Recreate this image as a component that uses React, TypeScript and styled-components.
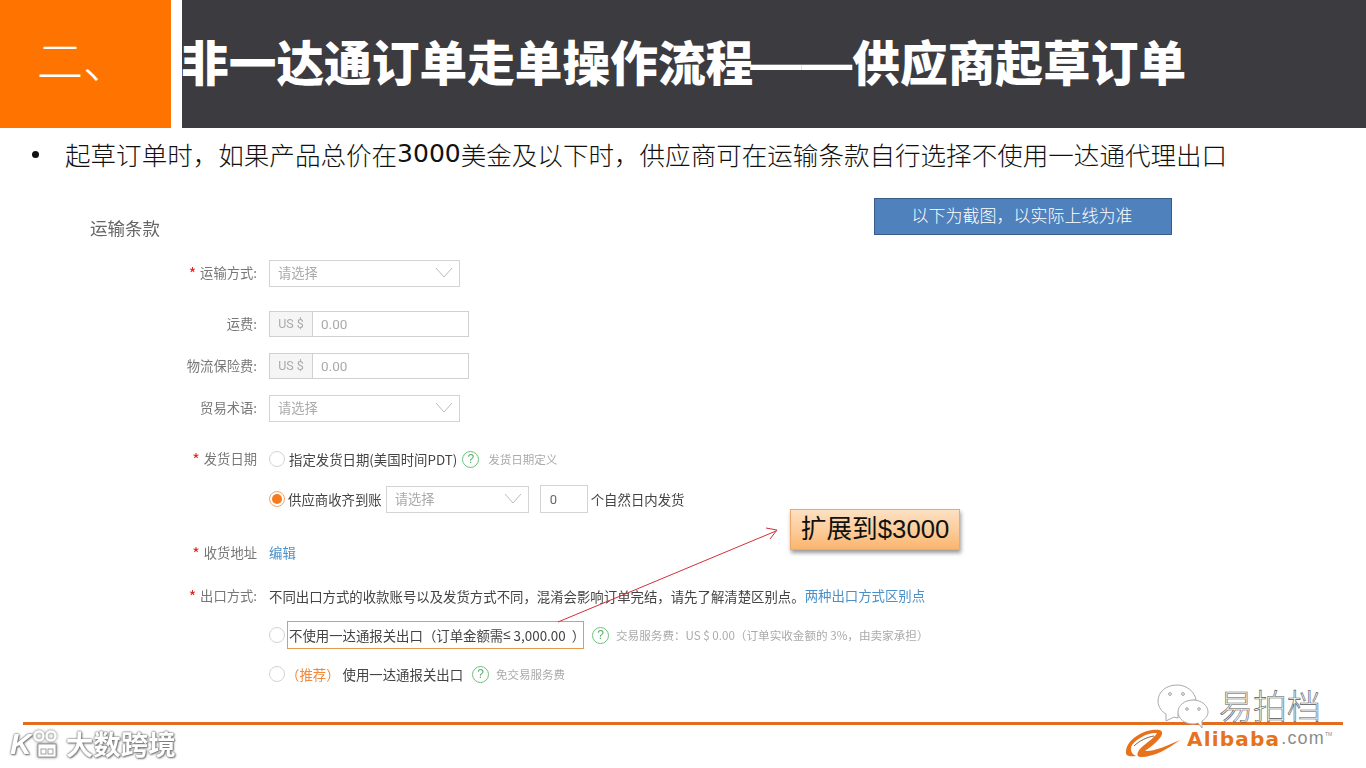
import React from "react";
import styled, { createGlobalStyle } from "styled-components";

const CJK = `"Noto Sans CJK SC", "Liberation Sans", sans-serif`;

const Global = createGlobalStyle`
  html, body { margin: 0; padding: 0; background: #fff; overflow: hidden; }
  * { box-sizing: border-box; }
`;

const Slide = styled.div`
  position: relative;
  width: 1366px;
  height: 768px;
  overflow: hidden;
  background: #fff;
  font-family: ${CJK};
`;

const Header = styled.header`
  display: flex;
  height: 128px;
`;

const SectionTab = styled.div`
  width: 171px;
  padding: 0 0 12px 37px;
  display: flex;
  align-items: center;
  background: #ff7300;
  color: #fff;
  font-size: 46px;
  font-weight: 300;
  line-height: 1;
`;

const TitleBar = styled.div`
  flex: 1;
  margin-left: 11px;
  padding-bottom: 6px;
  display: flex;
  align-items: center;
  overflow: hidden;
  background: #3c3b40;
`;

const Title = styled.h1`
  margin: 0 0 0 -1px;
  color: #fff;
  font-size: 47.7px;
  font-weight: 900;
  line-height: 1;
  white-space: nowrap;
`;

const TitleDash = styled.span`
  margin-left: -3px;
  font-family: "Liberation Sans", sans-serif;
  font-size: 51px;
  font-weight: 700;
  line-height: 0;
`;

const Bullet = styled.div`
  display: flex;
  align-items: center;
  height: 50px;
  padding-left: 32px;
  color: #111;
  font-size: 25.56px;
  font-weight: 300;
  white-space: nowrap;
`;

const BulletDot = styled.span`
  width: 7px;
  height: 7px;
  margin: 2px 26px 0 0;
  border-radius: 50%;
  background: #111;
`;

const Digits = styled.span`
  font-family: "DejaVu Sans", sans-serif;
  font-size: 25px;
  font-weight: 400;
`;

const Form = styled.section`
  filter: blur(0.4px);
`;

const Heading = styled.h2`
  margin: 38px 0 0 90px;
  height: 26px;
  color: #666;
  font-size: 17.5px;
  font-weight: 400;
  line-height: 24px;
`;

const Row = styled.div<{ $h: number; $mt: number }>`
  display: grid;
  grid-template-columns: 88px 1fr;
  column-gap: 12px;
  align-items: center;
  height: ${(p) => p.$h}px;
  margin: ${(p) => p.$mt}px 0 0 169px;
`;

const Label = styled.div`
  padding-bottom: 2px;
  color: #777;
  font-size: 13.3px;
  text-align: right;
  white-space: nowrap;
`;

const Star = styled.span`
  margin-right: 4px;
  color: #e2231a;
  font-size: 16px;
  line-height: 1;
  vertical-align: -2px;
`;

const Controls = styled.div`
  display: flex;
  align-items: center;
  height: 100%;
  white-space: nowrap;
`;

const Select = styled.div<{ $w: number; $ml?: number }>`
  display: flex;
  align-items: center;
  justify-content: space-between;
  width: ${(p) => p.$w}px;
  height: 27px;
  margin-left: ${(p) => p.$ml ?? 0}px;
  padding: 0 6px 2px 8px;
  border: 1px solid #d4d4d4;
  color: #aaa;
  font-size: 13.3px;
`;

const AmountInput = styled.div`
  display: flex;
  align-items: stretch;
  width: 200px;
  height: 100%;
  border: 1px solid #d0d0d0;
  font-family: "Roboto", sans-serif;
  font-size: 13.5px;
  color: #aaa;
`;

const Prefix = styled.div`
  display: flex;
  align-items: center;
  justify-content: center;
  width: 43px;
  padding-bottom: 2px;
  border-right: 1px solid #d0d0d0;
  background: #f5f5f5;
  font-size: 12.5px;
`;

const Value = styled.div`
  display: flex;
  align-items: center;
  padding: 0 0 1px 8px;
`;

const NumberBox = styled.div`
  display: flex;
  align-items: center;
  width: 48px;
  height: 28px;
  margin: 0 3px 0 11px;
  padding-left: 9px;
  border: 1px solid #d4d4d4;
  color: #666;
  font-family: "Roboto", sans-serif;
  font-size: 13px;
`;

const Radio = styled.span<{ $on?: boolean }>`
  flex: none;
  display: flex;
  align-items: center;
  justify-content: center;
  width: 16px;
  height: 16px;
  border-radius: 50%;
  border: 1px solid ${(p) => (p.$on ? "#f5a468" : "#d2d2d2")};
  background: #fff;
  &::after {
    content: "";
    display: ${(p) => (p.$on ? "block" : "none")};
    width: 10px;
    height: 10px;
    border-radius: 50%;
    background: #f77a1c;
  }
`;

const Text = styled.span<{ $ml?: number; $size?: number; $color?: string }>`
  margin-left: ${(p) => p.$ml ?? 0}px;
  padding-bottom: 1px;
  color: ${(p) => p.$color ?? "#444"};
  font-size: ${(p) => p.$size ?? 13.4}px;
`;

const Link = styled.span`
  padding-bottom: 2px;
  color: #4a90c8;
  font-size: 13.4px;
`;

const Help = styled.span<{ $ml: number }>`
  flex: none;
  display: flex;
  align-items: center;
  justify-content: center;
  width: 17px;
  height: 17px;
  margin-left: ${(p) => p.$ml}px;
  border: 1.5px solid #6cc07a;
  border-radius: 50%;
  color: #58ad68;
  font-family: "Liberation Sans", sans-serif;
  font-size: 12px;
`;

const Outlined = styled.div`
  display: flex;
  align-items: center;
  width: 297px;
  height: 28px;
  margin-left: 2px;
  padding: 0 0 1px 1px;
  border: 1px solid #e59a4e;
  color: #444;
  font-size: 13.4px;
`;

const LessEqual = styled.span`
  font-family: "Liberation Sans", sans-serif;
`;

const Closing = styled.span`
  margin-left: 6px;
`;

const Footer = styled.div`
  height: 3px;
  margin: 36px 23px 0;
  background: #e36c1f;
`;

const Note = styled.div`
  position: absolute;
  left: 874px;
  top: 198px;
  width: 298px;
  height: 37px;
  padding: 0 2px 4px 0;
  display: flex;
  align-items: center;
  justify-content: center;
  border: 1px solid #385d8a;
  background: #4f81bd;
  color: #fff;
  font-size: 17px;
  font-weight: 300;
`;

const Callout = styled.div`
  position: absolute;
  left: 790px;
  top: 509px;
  width: 170px;
  height: 41px;
  padding-bottom: 6px;
  display: flex;
  align-items: center;
  justify-content: center;
  border: 1px solid #f0a868;
  background: linear-gradient(180deg, #fde0c2 0%, #fccb98 55%, #fbb56e 100%);
  box-shadow: 1px 3px 4px rgba(0, 0, 0, 0.4);
  color: #111;
  font-family: "Liberation Sans", ${CJK};
  font-size: 25.7px;
  white-space: nowrap;
`;

const ArrowSvg = styled.svg`
  position: absolute;
  left: 550px;
  top: 520px;
`;

const WeChatSvg = styled.svg`
  position: absolute;
  left: 1156px;
  top: 683px;
`;

const Brand = styled.div`
  position: absolute;
  left: 1219px;
  top: 684px;
  color: #fff;
  font-size: 34px;
  font-weight: 300;
  line-height: 42px;
  -webkit-text-stroke: 0.6px #555;
  white-space: nowrap;
`;

const AliLogo = styled.div`
  position: absolute;
  left: 1125px;
  top: 729px;
  display: flex;
  align-items: flex-start;
`;

const AliName = styled.span`
  margin: -2px 0 0 6px;
  color: #e8711c;
  font-family: "DejaVu Sans", sans-serif;
  font-size: 20px;
  font-weight: 700;
  letter-spacing: 1.2px;
  line-height: 24px;
`;

const AliCom = styled.span`
  margin: -1px 0 0 1px;
  color: #8c8c8c;
  font-family: "Liberation Sans", sans-serif;
  font-size: 18px;
  letter-spacing: 1.2px;
  line-height: 21px;
`;

const AliMark = styled.span`
  margin-top: 2px;
  color: #8c8c8c;
  font-family: "Liberation Sans", sans-serif;
  font-size: 5px;
  line-height: 6px;
`;

const Watermark = styled.div`
  position: absolute;
  left: 10px;
  top: 728px;
  display: flex;
  align-items: center;
  height: 32px;
  color: #fff;
  filter: blur(0.4px);
  text-shadow: 0 0 2px #777, 0 0 2px #777, 1px 1px 2px #777;
  white-space: nowrap;
`;

const WatermarkK = styled.span`
  font-family: "Liberation Sans", sans-serif;
  font-size: 30px;
  font-weight: 700;
  font-style: italic;
  line-height: 1;
`;

const WatermarkSvg = styled.svg`
  filter: drop-shadow(0 0 1.5px #666);
  margin-right: 4px;
`;

const WatermarkText = styled.span`
  font-size: 27.5px;
  font-weight: 700;
  line-height: 1;
`;

const Chevron = () => (
  <svg width="18" height="11" viewBox="0 0 18 11">
    <path d="M1 1 L9 10 L17 1" fill="none" stroke="#bbb" strokeWidth="1" />
  </svg>
);

export default function App() {
  return (
    <Slide>
      <Global />
      <Header>
        <SectionTab>二、</SectionTab>
        <TitleBar>
          <Title>非一达通订单走单操作流程<TitleDash>——</TitleDash>供应商起草订单</Title>
        </TitleBar>
      </Header>
      <Bullet>
        <BulletDot />
        起草订单时，如果产品总价在<Digits>3000</Digits>美金及以下时，供应商可在运输条款自行选择不使用一达通代理出口
      </Bullet>
      <Form>
        <Heading>运输条款</Heading>
        <Row $h={27} $mt={18}>
          <Label><Star>*</Star>运输方式:</Label>
          <Controls>
            <Select $w={191}>请选择<Chevron /></Select>
          </Controls>
        </Row>
        <Row $h={26} $mt={24}>
          <Label>运费:</Label>
          <Controls>
            <AmountInput><Prefix>US $</Prefix><Value>0.00</Value></AmountInput>
          </Controls>
        </Row>
        <Row $h={26} $mt={16}>
          <Label>物流保险费:</Label>
          <Controls>
            <AmountInput><Prefix>US $</Prefix><Value>0.00</Value></AmountInput>
          </Controls>
        </Row>
        <Row $h={26} $mt={16}>
          <Label>贸易术语:</Label>
          <Controls>
            <Select $w={191}>请选择<Chevron /></Select>
          </Controls>
        </Row>
        <Row $h={24} $mt={26}>
          <Label><Star>*</Star>发货日期</Label>
          <Controls>
            <Radio />
            <Text $ml={4}>指定发货日期(美国时间PDT)</Text>
            <Help $ml={5}>?</Help>
            <Text $ml={9} $size={11.5} $color="#aaa">发货日期定义</Text>
          </Controls>
        </Row>
        <Row $h={28} $mt={14}>
          <Label />
          <Controls>
            <Radio $on />
            <Text $ml={3}>供应商收齐到账</Text>
            <Select $w={143} $ml={4}>请选择<Chevron /></Select>
            <NumberBox>0</NumberBox>
            <Text>个自然日内发货</Text>
          </Controls>
        </Row>
        <Row $h={24} $mt={28}>
          <Label><Star>*</Star>收货地址</Label>
          <Controls><Link>编辑</Link></Controls>
        </Row>
        <Row $h={24} $mt={19}>
          <Label><Star>*</Star>出口方式:</Label>
          <Controls>
            <Text>不同出口方式的收款账号以及发货方式不同，混淆会影响订单完结，请先了解清楚区别点。</Text>
            <Link>两种出口方式区别点</Link>
          </Controls>
        </Row>
        <Row $h={28} $mt={13}>
          <Label />
          <Controls>
            <Radio />
            <Outlined>不使用一达通报关出口（订单金额需<LessEqual>≤</LessEqual>&nbsp;3,000.00<Closing>）</Closing></Outlined>
            <Help $ml={8}>?</Help>
            <Text $ml={7} $size={11.6} $color="#aaa">交易服务费：US $ 0.00（订单实收金额的 3%，由卖家承担）</Text>
          </Controls>
        </Row>
        <Row $h={24} $mt={13}>
          <Label />
          <Controls>
            <Radio />
            <Text $ml={1} $color="#f08a3c">（推荐）</Text>
            <Text $ml={3}>使用一达通报关出口</Text>
            <Help $ml={9}>?</Help>
            <Text $ml={7} $size={11.5} $color="#aaa">免交易服务费</Text>
          </Controls>
        </Row>
      </Form>
      <Footer />

      <Note>以下为截图，以实际上线为准</Note>
      <ArrowSvg width="235" height="106" viewBox="0 0 235 106">
        <path d="M8 102 L226 11" stroke="#d0303a" strokeWidth="1" fill="none" />
        <path d="M216 8 L227 10 L220 19" stroke="#d0303a" strokeWidth="1" fill="none" />
      </ArrowSvg>
      <Callout>扩展到$3000</Callout>

      <WeChatSvg width="56" height="48" viewBox="0 0 56 48">
        <path d="M21 2 C10 2 2 9 2 18 C2 24 6 29 10 31 L10 38 L18 34 C19 34.5 21 35 22 35 C21 25 29 17 40 17 C39 9 31 2 21 2 Z" fill="#fff" stroke="#aaa" strokeWidth="1" />
        <path d="M37 17 C28 17 22 23 22 29 C22 36 29 41 37 41 C39 41 41 40.5 42 40 L46 45 L46 38 C49 36 52 33 52 29 C52 23 46 17 37 17 Z" fill="#fff" stroke="#aaa" strokeWidth="1" />
        <circle cx="14" cy="11" r="1.4" fill="none" stroke="#888" strokeWidth="0.8" />
        <circle cx="27" cy="11" r="1.4" fill="none" stroke="#888" strokeWidth="0.8" />
        <circle cx="31" cy="26" r="1.3" fill="none" stroke="#888" strokeWidth="0.8" />
        <circle cx="43" cy="26" r="1.3" fill="none" stroke="#888" strokeWidth="0.8" />
      </WeChatSvg>
      <Brand>易拍档</Brand>

      <AliLogo>
        <svg width="56" height="29" viewBox="0 0 56 29">
          <path d="M1 22 C2 12 14 3 27 1 C34 0 38 1 37 5 C36 10 27 17 20 22 C27 23 42 17 55 11 C43 20 29 28 16 28 C10 28 12 22 18 17 C24 12 30 8 32 4 C24 3 12 9 7 16 C5 20 6 25 11 27 C5 28 0 27 1 22 Z" fill="#e8711c" />
          <path d="M9 17 C14 12 22 8 29 7" fill="none" stroke="#5a3a20" strokeWidth="0.8" />
        </svg>
        <AliName>Alibaba</AliName>
        <AliCom>.com</AliCom>
        <AliMark>TM</AliMark>
      </AliLogo>

      <Watermark>
        <WatermarkK>K</WatermarkK>
        <WatermarkSvg width="30" height="30" viewBox="0 0 30 30">
          <circle cx="7" cy="7" r="4.5" fill="none" stroke="#fff" strokeWidth="2.4" />
          <circle cx="19" cy="7" r="4.5" fill="none" stroke="#fff" strokeWidth="2.4" />
          <rect x="6" y="15" width="18" height="13" fill="#fff" stroke="#888" strokeWidth="0.8" />
          <rect x="9" y="20" width="5" height="5" fill="none" stroke="#888" strokeWidth="0.8" />
          <rect x="16" y="20" width="5" height="5" fill="none" stroke="#888" strokeWidth="0.8" />
        </WatermarkSvg>
        <WatermarkText>大数跨境</WatermarkText>
      </Watermark>
    </Slide>
  );
}
